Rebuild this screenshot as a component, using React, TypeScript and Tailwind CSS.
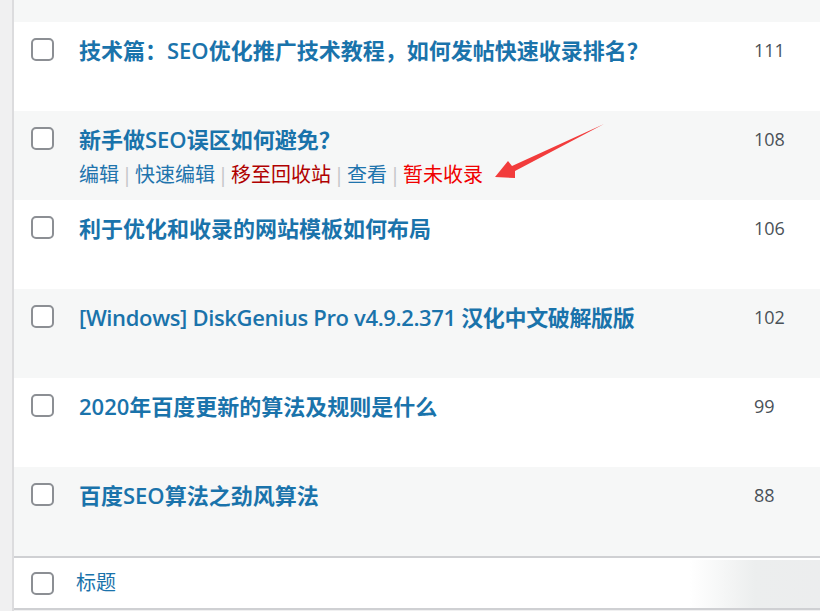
import React from "react";

type Post = {
  title: string;
  count: number;
  actions?: boolean;
  tight?: boolean;
};

const posts: Post[] = [
  { title: "技术篇：SEO优化推广技术教程，如何发帖快速收录排名？", count: 111 },
  { title: "新手做SEO误区如何避免？", count: 108, actions: true },
  { title: "利于优化和收录的网站模板如何布局", count: 106 },
  { title: "[Windows] DiskGenius Pro v4.9.2.371 汉化中文破解版版", count: 102, tight: true },
  { title: "2020年百度更新的算法及规则是什么", count: 99 },
  { title: "百度SEO算法之劲风算法", count: 88 },
];

const font = "font-['Open_Sans','Noto_Sans_CJK_SC',sans-serif]";

function Checkbox() {
  return (
    <span className="block w-[23px] h-[23px] rounded-[5px] border-2 border-[#8c8f94] bg-white" />
  );
}

function Sep() {
  return <span className="inline-block w-[16px] text-center text-[#c3c4c7]">|</span>;
}

function Row({ post, index }: { post: Post; index: number }) {
  const striped = index % 2 === 1;
  return (
    <div
      className={`grid grid-cols-[65px_675px_1fr] h-[89px] ${
        striped ? "bg-[#f6f7f7]" : "bg-white"
      }`}
    >
      <div className="pt-[16px] pl-[17px]">
        <Checkbox />
      </div>
      <div className="pt-[13px]">
        <div
          className={`text-[22px] leading-[30px] font-semibold text-[#1a73ab] whitespace-nowrap ${
            post.tight ? "tracking-[-0.35px]" : ""
          }`}
        >
          {post.title}
        </div>
        {post.actions && (
          <div className="mt-[6px] text-[20px] leading-[30px] whitespace-nowrap">
            <span className="text-[#1f74ad]">编辑</span>
            <Sep />
            <span className="text-[#1f74ad]">快速编辑</span>
            <Sep />
            <span className="text-[#b00000]">移至回收站</span>
            <Sep />
            <span className="text-[#1f74ad]">查看</span>
            <Sep />
            <span className="text-[#f00000]">暂未收录</span>
          </div>
        )}
      </div>
      <div className="pt-[13px] text-[18px] leading-[30px] text-[#4a5158]">
        {post.count}
      </div>
    </div>
  );
}

export default function App() {
  return (
    <div className={`relative w-[820px] h-[611px] overflow-hidden bg-[#f0f0f1] ${font}`}>
      <div className="flex h-full">
        <div className="w-[12px] shrink-0" />
        <div className="flex-1 flex flex-col border-l-2 border-[#dcdcde]">
          <div className="h-[22px] bg-[#f6f7f7]" />
          {posts.map((post, i) => (
            <Row key={post.title} post={post} index={i} />
          ))}
          <div className="relative flex items-center h-[54px] bg-white border-t-2 border-b-2 border-[#cfd0d3]">
            <div className="pl-[17px] w-[62px]">
              <Checkbox />
            </div>
            <span className="text-[20px] text-[#1a73ab]">标题</span>
            <div className="absolute right-0 top-[2px] bottom-0 w-[130px] bg-gradient-to-r from-white via-[#eceeee] to-[#ecedee]" />
          </div>
        </div>
      </div>

      {/* red annotation arrow */}
      <svg
        className="absolute left-0 top-0 pointer-events-none"
        width="820"
        height="611"
        viewBox="0 0 820 611"
      >
        <polygon
          points="495,177 508,161 512,166 604,124 515,171 515,178"
          fill="#f23c3c"
        />
      </svg>
    </div>
  );
}
